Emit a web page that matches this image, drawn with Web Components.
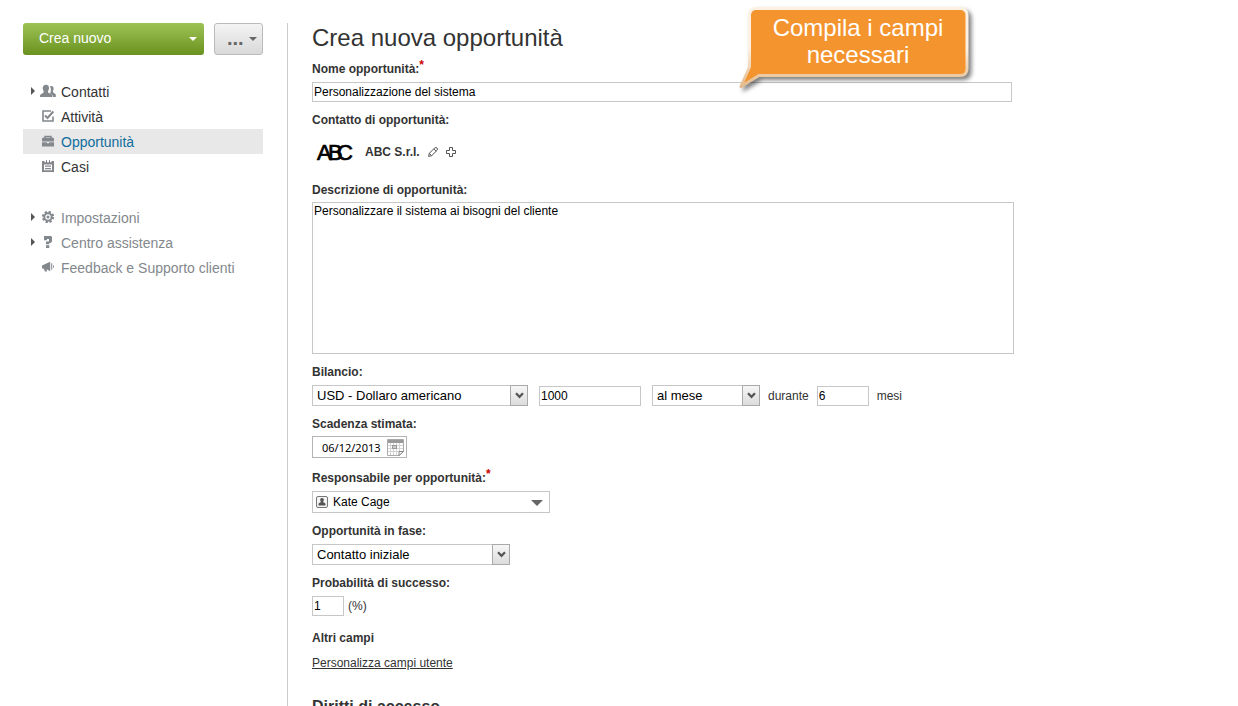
<!DOCTYPE html>
<html lang="it">
<head>
<meta charset="utf-8">
<title>Crea nuova opportunità</title>
<style>
  :root { scrollbar-width: none; }
  body {
    margin: 0;
    background: #fff;
    color: #333;
    font: 12px/16px "Liberation Sans", Arial, sans-serif;
  }
</style>
</head>
<body>

<crm-layout>
  <crm-sidebar slot="side">
    <crm-button slot="actions" kind="main">Crea nuovo</crm-button>
    <crm-button slot="actions" kind="more">...</crm-button>
    <crm-nav-group>
      <crm-nav-item icon="people" expandable>Contatti</crm-nav-item>
      <crm-nav-item icon="task">Attività</crm-nav-item>
      <crm-nav-item icon="case" active>Opportunità</crm-nav-item>
      <crm-nav-item icon="board">Casi</crm-nav-item>
    </crm-nav-group>
    <crm-nav-group muted>
      <crm-nav-item icon="gear" expandable>Impostazioni</crm-nav-item>
      <crm-nav-item icon="help" expandable>Centro assistenza</crm-nav-item>
      <crm-nav-item icon="horn">Feedback e Supporto clienti</crm-nav-item>
    </crm-nav-group>
  </crm-sidebar>

  <crm-form heading="Crea nuova opportunità">
    <crm-callout slot="hint">Compila i campi necessari</crm-callout>
    <crm-input label="Nome opportunità:" value="Personalizzazione del sistema" size="full" required></crm-input>
    <crm-contact label="Contatto di opportunità:" name="ABC S.r.l."></crm-contact>
    <crm-textarea label="Descrizione di opportunità:">Personalizzare il sistema ai bisogni del cliente</crm-textarea>
    <crm-row>
      <crm-select label="Bilancio:" value="USD - Dollaro americano" size="large"></crm-select>
      <crm-input hint="Importo" value="1000" size="medium"></crm-input>
      <crm-row tight>
        <crm-select hint="Periodo" value="al mese" size="small"></crm-select>
        <crm-input before="durante" after="mesi" value="6" size="small"></crm-input>
      </crm-row>
    </crm-row>
    <crm-date label="Scadenza stimata:" value="06/12/2013"></crm-date>
    <crm-person label="Responsabile per opportunità:" value="Kate Cage" required></crm-person>
    <crm-select label="Opportunità in fase:" value="Contatto iniziale" size="medium"></crm-select>
    <crm-input label="Probabilità di successo:" value="1" after="(%)" size="tiny"></crm-input>
    <crm-extra heading="Altri campi">Personalizza campi utente</crm-extra>
    <crm-section>Diritti di accesso</crm-section>
  </crm-form>
</crm-layout>

<script>
const ICONS = {
  people: `<svg width="16" height="14" viewBox="0 0 16 14"><path d="M10 2.2c2-.9 3.9.4 3.6 2.6-.1 1.5-.7 2-.8 3 .3 1.200 2.700 1.700 3 2.900V13h-2.600c-.3-2.300-2-2.800-3.200-3.500.9-1.300 1.500-4.700 0-7.300z"/><path d="M5.500.8C7.900.6 9.300 2.200 9 4.500 8.800 6 8 6.500 8 7.900c.3 1.400 4 1.700 4.300 3.500V13H0v-1.600c.3-1.800 3.400-2 3.700-3.500 0-1.400-.9-2-1-3.600C2.600 2.500 3.700 1 5.500.8z"/></svg>`,
  task: `<svg width="12" height="12" viewBox="0 0 12 12"><path d="M9 1H1v10h10V6.500" fill="none" stroke="currentColor" stroke-width="1.600"/><path d="M3 5.500 5.500 8l5.800-6.500" fill="none" stroke="currentColor" stroke-width="2"/></svg>`,
  case: `<svg width="12" height="12" viewBox="0 0 12 12"><path d="M3 3V1.300h6V3" fill="none" stroke="currentColor" stroke-width="1.300"/><path d="M1 2.600h10l1 1v2.900H0V3.600zM0 7.200h4.800v1h2.400v-1H12V11.500H0z"/></svg>`,
  board: `<svg width="12" height="12" viewBox="0 0 12 12"><path fill-rule="evenodd" d="M0 1h2.500v1.300h1.500V0h1v2.300h2V0h1v2.300h1.500V1H12v11H0zM2 4.500v5.800h8V4.500z"/><path d="M3 5.500h6v1.200H3zM3 8h6v1.200H3z"/></svg>`,
  gear: `<svg width="12" height="12" viewBox="0 0 12 12"><circle cx="6" cy="6" r="5" fill="none" stroke="currentColor" stroke-width="2.400" stroke-dasharray="2.200 1.727"/><circle cx="6" cy="6" r="3.700" fill="none" stroke="currentColor" stroke-width="2"/><circle cx="6" cy="6" r="1.500"/></svg>`,
  help: `<svg width="12" height="12" viewBox="0 0 12 12"><path d="M2 0h7l1 1v4.500L8.500 7H7.300v1.200H4V5.400h3V3H4.900v1.300H2zM4 9.300h3.300V12H4z"/></svg>`,
  horn: `<svg width="12" height="12" viewBox="0 0 12 12"><path d="M8.200.800v9.400L4.600 8.300l.5 2.200H2.800L2 8 0 7.300V4.500z"/><path d="M9.200 2.200h1v6.600h-1zM11.200 4.300h.8v2.400h-.8z"/></svg>`,
  chevron: `<svg width="9" height="7" viewBox="0 0 9 7"><path d="M1 1.200 4.500 4.800 8 1.200" fill="none" stroke="#555" stroke-width="2.200"/></svg>`
};

const FIELD_CSS = `
  :host { display: block; }
  label.title { display: block; width: max-content; margin-bottom: 5px; color: #333; font-weight: bold; }
  sup { color: #c00; font-size: 12px; line-height: 0; vertical-align: 4px; }
  input, select, textarea {
    box-sizing: border-box;
    margin: 0;
    border: 1px solid #c7c7c7;
    border-radius: 0;
    outline: 0;
    background: #fff;
    color: #000;
    font: inherit;
  }
  input { height: 20px; padding: 0 1px; }
  select { appearance: none; }
`;

// Base class: renders once, on the first connection
class CrmElement extends HTMLElement {
  constructor() {
    super();
    this.attachShadow({mode: 'open'});
  }

  connectedCallback() {
    if (!this.shadowRoot.childNodes.length) {
      this.shadowRoot.innerHTML = this.render();
    }
  }

  attr(name) {
    return this.getAttribute(name) || '';
  }

  // the field's title, tied to the control with id="control"
  title() {
    if (!this.hasAttribute('label')) return '';
    const star = this.hasAttribute('required') ? '<sup>*</sup>' : '';
    return `<label class="title" for="control">${this.attr('label')}${star}</label>`;
  }

  hint() {
    return this.hasAttribute('hint') ? `aria-label="${this.attr('hint')}"` : '';
  }
}

customElements.define('crm-layout', class extends CrmElement {
  render() {
    return `
    <style>
      :host { display: flex; box-sizing: border-box; min-height: 100vh; padding: 23px 24px 0 23px; }
      aside { flex: none; width: 240px; padding-right: 24px; border-right: 1px solid #ccc; }
      main { flex: 1; min-width: 0; padding: 1px 0 24px 24px; }
    </style>
    <aside><slot name="side"></slot></aside>
    <main><slot></slot></main>`;
  }
});

customElements.define('crm-sidebar', class extends CrmElement {
  render() {
    return `
    <style>
      :host { display: block; }
      .actions { display: flex; gap: 10px; margin-bottom: 24px; }
    </style>
    <div class="actions"><slot name="actions"></slot></div>
    <nav><slot></slot></nav>`;
  }
});

customElements.define('crm-button', class extends CrmElement {
  render() {
    return `
    <style>
      :host { display: block; flex: 1; }
      :host([kind=more]) { flex: none; width: 49px; }
      button {
        display: flex;
        align-items: center;
        justify-content: space-between;
        box-sizing: border-box;
        width: 100%;
        height: 32px;
        padding: 0 7px 2px 16px;
        border: 0;
        border-radius: 3px;
        background: linear-gradient(#9dc355, #6a921f);
        color: #fff;
        font: 14px/16px "Liberation Sans", Arial, sans-serif;
      }
      i { border: solid transparent; border-width: 4px 4px 0; border-top-color: currentColor; margin-top: 2px; }
      :host([kind=more]) button {
        padding: 0 5px 2px 12px;
        border: 1px solid #bbb;
        background: linear-gradient(#f4f4f4, #d9d9d9);
        color: #666;
      }
      :host([kind=more]) span { font-size: 20px; font-weight: bold; }
    </style>
    <button type="button"><span><slot></slot></span><i></i></button>`;
  }
});

customElements.define('crm-nav-group', class extends CrmElement {
  render() {
    return `
    <style>
      :host { display: block; margin-bottom: 26px; color: #333; }
      :host([muted]) { color: #83888d; }
    </style>
    <slot></slot>`;
  }
});

customElements.define('crm-nav-item', class extends CrmElement {
  render() {
    return `
    <style>
      :host { display: block; }
      :host([active]) { background: #e8e8e8; color: #116d9d; }
      a {
        display: grid;
        grid-template-columns: 12px 16px 1fr;
        column-gap: 5px;
        align-items: center;
        height: 25px;
        color: inherit;
        font-size: 14px;
        text-decoration: none;
      }
      i { justify-self: end; margin-bottom: 2px; }
      :host([expandable]) i { border: solid transparent; border-width: 4px 0 4px 4px; border-left-color: #555; }
      svg { justify-self: center; margin-bottom: 2px; color: #83888d; fill: currentColor; }
    </style>
    <a href="#"><i></i>${ICONS[this.attr('icon')]}<span><slot></slot></span></a>`;
  }
});

customElements.define('crm-form', class extends CrmElement {
  render() {
    return `
    <style>
      :host { display: block; }
      header { position: relative; margin-bottom: 9px; }
      h1 { margin: 0; color: #333; font-size: 24px; font-weight: normal; line-height: 28px; }
      form { display: flex; flex-direction: column; gap: 10px; max-width: 700px; }
    </style>
    <header><h1>${this.attr('heading')}</h1><slot name="hint"></slot></header>
    <form><slot></slot></form>`;
  }
});

// Balloon that floats over the form and points at the first field
customElements.define('crm-callout', class extends CrmElement {
  render() {
    return `
    <style>
      :host { display: block; position: absolute; z-index: 1; top: -20px; left: 424px; width: 240px; height: 92px; }
      svg { position: absolute; top: 0; left: 0; filter: drop-shadow(3px 3px 2px rgba(0, 0, 0, .5)); }
      p {
        position: relative;
        margin: 0;
        padding: 10px 22px 0 26px;
        color: #fff;
        font-size: 24px;
        line-height: 27px;
        text-align: center;
      }
    </style>
    <svg width="240" height="92" viewBox="0 0 240 92">
      <defs><linearGradient id="rim" x1="0" y1="0" x2="0" y2="1"><stop offset=".5" stop-color="#fef1e2"/><stop offset="1" stop-color="#e3ba8c"/></linearGradient></defs>
      <path d="M20 4.500h204q7 0 7 7v53q0 7-7 7H23L5 82.500 13.500 63V11.500q0-7 7-7z" fill="#f4942e" stroke="url(#rim)" stroke-width="3" stroke-linejoin="round"/>
    </svg>
    <p><slot></slot></p>`;
  }
});

customElements.define('crm-row', class extends CrmElement {
  render() {
    return `
    <style>
      :host { display: flex; align-items: flex-end; gap: 11px; }
      :host([tight]) { gap: 8px; }
    </style>
    <slot></slot>`;
  }
});

customElements.define('crm-input', class extends CrmElement {
  render() {
    const before = this.attr('before');
    const after = this.attr('after');
    return `
    <style>${FIELD_CSS}
      .line { display: flex; align-items: center; gap: 8px; }
      input { width: 100%; }
      :host([size=medium]) input { width: 102px; }
      :host([size=small]) input { width: 52px; }
      :host([size=tiny]) input { width: 32px; }
      :host([size=tiny]) .line { gap: 4px; }
    </style>
    ${this.title()}
    <div class="line">
      ${before && `<label for="control">${before}</label>`}
      <input id="control" type="text" value="${this.attr('value')}" ${this.hint()}>
      ${after && `<span>${after}</span>`}
    </div>`;
  }
});

customElements.define('crm-textarea', class extends CrmElement {
  render() {
    return `
    <style>${FIELD_CSS}
      label.title { margin-bottom: 4px; }
      textarea { display: block; width: calc(100% + 2px); height: 152px; padding: 0 1px; resize: none; }
    </style>
    ${this.title()}
    <textarea id="control">${this.textContent}</textarea>`;
  }
});

customElements.define('crm-select', class extends CrmElement {
  render() {
    return `
    <style>${FIELD_CSS}
      .box { display: grid; width: 216px; height: 21px; }
      :host([size=medium]) .box { width: 198px; }
      :host([size=small]) .box { width: 108px; }
      select, .drop { grid-area: 1 / 1; }
      select { width: 100%; height: 21px; padding: 0 20px 0 4px; font-size: 13px; }
      .drop {
        display: grid;
        place-items: center;
        justify-self: end;
        box-sizing: border-box;
        width: 18px;
        border: 1px solid #aaa;
        background: linear-gradient(#f6f6f6, #dcdcdc);
        pointer-events: none;
      }
    </style>
    ${this.title()}
    <div class="box">
      <select id="control" ${this.hint()}><option>${this.attr('value')}</option></select>
      <span class="drop">${ICONS.chevron}</span>
    </div>`;
  }
});

customElements.define('crm-date', class extends CrmElement {
  render() {
    return `
    <style>${FIELD_CSS}
      label.title { margin-bottom: 4px; }
      .box { display: flex; align-items: center; box-sizing: border-box; width: 95px; height: 22px; border: 1px solid #b4b4b4; }
      input { flex: 1; min-width: 0; padding: 0 0 0 9px; border: 0; font: 11px/16px "Noto Sans", sans-serif; }
      button { display: block; margin: 0 2px; padding: 0; border: 0; background: none; }
      svg { display: block; }
    </style>
    ${this.title()}
    <div class="box">
      <input id="control" type="text" value="${this.attr('value')}">
      <button type="button" aria-label="Calendario">
        <svg width="17" height="17" viewBox="0 0 17 17">
          <path d="M.5.500h16v12l-4 4H.5z" fill="#fff" stroke="#aaa"/>
          <path d="M1 1h15v3H1z" fill="#999"/>
          <path d="M3.500 4v12M6.500 4v12M9.500 4v12M12.500 4v9M1 6.500h15M1 9.500h15M1 12.500h15" stroke="#d4d4d4"/>
          <path d="M5 6h5v4H5z" fill="#999"/><path d="M6 7h3v2H6z" fill="#ccc"/>
          <path d="M12 16.500v-4h4.500z" fill="#fff" stroke="#888"/>
        </svg>
      </button>
    </div>`;
  }
});

customElements.define('crm-person', class extends CrmElement {
  render() {
    return `
    <style>${FIELD_CSS}
      :host { padding-top: 2px; }
      .box { display: grid; align-items: center; width: 238px; }
      select, svg, i { grid-area: 1 / 1; }
      select { width: 100%; height: 22px; padding: 0 24px 0 20px; }
      svg { margin-left: 4px; pointer-events: none; }
      i { justify-self: end; margin: 2px 7px 0 0; border: solid transparent; border-width: 6px 6px 0; border-top-color: #666; pointer-events: none; }
    </style>
    ${this.title()}
    <div class="box">
      <select id="control"><option>${this.attr('value')}</option></select>
      <svg width="12" height="12" viewBox="0 0 12 12">
        <rect x=".5" y=".5" width="11" height="11" rx="1.500" fill="#f4f4f4" stroke="#777"/>
        <path d="M6 2c1.300 0 1.900.8 1.800 2.100C7.700 5 7.200 5.400 7.200 6c.2.700 2.300.8 2.300 2v1.600h-7V8c0-1.200 2.100-1.300 2.300-2 0-.6-.5-1-.6-1.900C4.100 2.800 4.700 2 6 2z" fill="#555"/>
      </svg>
      <i></i>
    </div>`;
  }
});

customElements.define('crm-contact', class extends CrmElement {
  render() {
    return `
    <style>
      :host { display: block; }
      h2 { margin: 0 0 4px; font-size: 12px; line-height: 16px; }
      div { display: flex; align-items: center; height: 40px; padding-left: 4px; }
      strong { margin: 0 8px 0 11px; }
      button { margin-right: 8px; padding: 0; border: 0; background: none; }
      svg { display: block; }
      text { font-size: 22px; fill: #000; stroke: #000; stroke-width: .7px; }
    </style>
    <h2>${this.attr('label')}</h2>
    <div>
      <svg width="38" height="26" viewBox="0 0 38 26"><text x="1 12 21" y="21">ABC</text></svg>
      <strong>${this.attr('name')}</strong>
      <button type="button" aria-label="Modifica">
        <svg width="10" height="10" viewBox="0 0 10 10" fill="none" stroke="#555"><path d="M.6 9.400 1.300 6.300 6.600 1Q8 0 9 1t0 2.400L3.700 8.700zM5.800 1.900l2.300 2.300M1.300 6.300l2.400 2.400"/></svg>
      </button>
      <button type="button" aria-label="Aggiungi">
        <svg width="10" height="10" viewBox="0 0 10 10" fill="none" stroke="#555"><path d="M3.500.500h3v3h3v3h-3v3h-3v-3h-3v-3h3z"/></svg>
      </button>
    </div>`;
  }
});

customElements.define('crm-extra', class extends CrmElement {
  render() {
    return `
    <style>
      :host { display: block; padding-top: 4px; }
      h2 { margin: 0 0 9px; font-size: 12px; line-height: 16px; }
      a { color: #333; text-decoration: underline; }
    </style>
    <h2>${this.attr('heading')}</h2>
    <a href="#"><slot></slot></a>`;
  }
});

customElements.define('crm-section', class extends CrmElement {
  render() {
    return `
    <style>
      :host { display: block; padding-top: 16px; }
      h2 { margin: 0; font-size: 16px; line-height: 20px; }
    </style>
    <h2><slot></slot></h2>`;
  }
});
</script>
</body>
</html>
